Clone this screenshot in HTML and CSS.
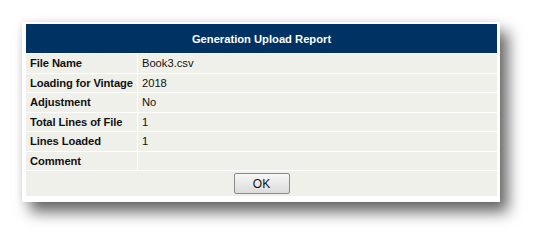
FILE: index.html
```html
<!DOCTYPE html>
<html lang="en">
<head>
  <meta charset="UTF-8">
  <title>Generation Upload Report</title>
  <link rel="stylesheet" href="styles.css">
</head>
<body>
  <div class="report">
    <table class="report-table">
      <tr>
        <th colspan="2" class="title">Generation Upload Report</th>
      </tr>
      <tr>
        <td class="label">File Name</td>
        <td class="value">Book3.csv</td>
      </tr>
      <tr>
        <td class="label">Loading for Vintage</td>
        <td class="value">2018</td>
      </tr>
      <tr>
        <td class="label">Adjustment</td>
        <td class="value">No</td>
      </tr>
      <tr>
        <td class="label">Total Lines of File</td>
        <td class="value">1</td>
      </tr>
      <tr>
        <td class="label">Lines Loaded</td>
        <td class="value">1</td>
      </tr>
      <tr>
        <td class="label">Comment</td>
        <td class="value"></td>
      </tr>
      <tr>
        <td colspan="2" class="actions">
          <button type="button" class="ok-btn">OK</button>
        </td>
      </tr>
    </table>
  </div>
</body>
</html>
```

FILE: styles.css
```css
body {
  margin: 0;
  padding: 22px 0 43px 22px;
  background-color: #fff;
  font-family: "Liberation Sans", Arial, sans-serif;
}
.report {
  width: 478px;
  box-sizing: border-box;
  padding: 1px 2px 5px 3px;
  background-color: #fff;
  box-shadow: 8px 10px 14px rgba(0, 0, 0, 0.6), -1px -1px 6px rgba(0, 0, 0, 0.08);
}
.report-table {
  width: 100%;
  border-collapse: separate;
  border-spacing: 1px;
  font-size: 11.2px;
  color: #111;
}
.title {
  background-color: #013264;
  color: #fff;
  height: 29px;
  padding: 0;
  font-weight: bold;
  text-align: center;
}
.report-table td {
  background-color: #f0f0eb;
  height: 18.5px;
  padding: 0 4px;
  white-space: nowrap;
}
.report-table .label {
  width: 102px;
  font-weight: bold;
  letter-spacing: -0.1px;
}
.actions {
  text-align: center;
}
.report-table .actions {
  height: 25px;
  padding: 0;
}
.ok-btn {
  width: 56px;
  height: 21px;
  padding: 0;
  font-family: "Liberation Sans", Arial, sans-serif;
  font-size: 12px;
  color: #111;
  border: 1px solid #8a8a8a;
  border-radius: 2px;
  background: linear-gradient(#f6f6f6, #dcdcdc);
}
```
